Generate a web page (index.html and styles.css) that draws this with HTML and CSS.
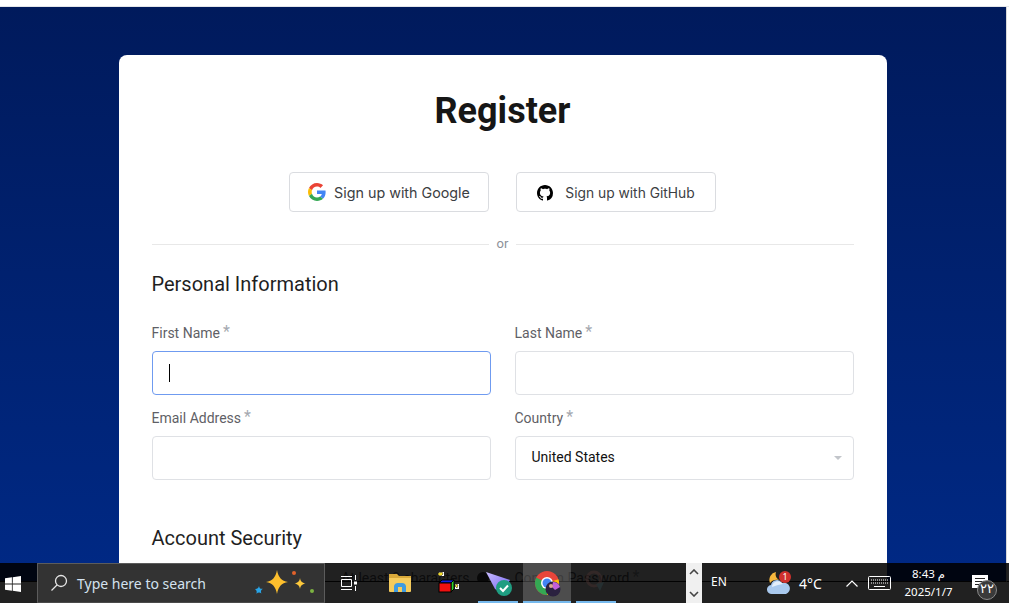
FILE: index.html
```html
<!DOCTYPE html>
<html lang="en">
<head>
<meta charset="utf-8">
<title>Register</title>
<link rel="stylesheet" href="styles.css">
</head>
<body>
<div class="topstrip"></div>
<div class="viewport">
  <main class="page">
    <section class="card">
      <h1 class="title">Register</h1>
      <div class="social">
        <button class="social-btn google">
          <svg class="g-icon" viewBox="0 0 48 48" width="18" height="18"><path fill="#EA4335" d="M24 9.5c3.5 0 6.7 1.2 9.2 3.6l6.9-6.9C35.9 2.4 30.5 0 24 0 14.6 0 6.5 5.4 2.6 13.2l8 6.2C12.4 13.7 17.7 9.500 24 9.500z"/><path fill="#4285F4" d="M47 24.500c0-1.600-.1-3.100-.4-4.500H24v9h12.900c-.6 3-2.200 5.500-4.700 7.200l7.700 6c4.500-4.200 7.100-10.300 7.100-17.700z"/><path fill="#FBBC05" d="M10.600 28.600c-.5-1.400-.8-3-.8-4.600s.3-3.200.8-4.600l-8-6.200C.9 16.500 0 20.100 0 24s.9 7.500 2.600 10.800l8-6.200z"/><path fill="#34A853" d="M24 48c6.500 0 11.900-2.100 15.900-5.800l-7.700-6c-2.200 1.400-4.900 2.300-8.200 2.300-6.300 0-11.600-4.200-13.400-9.900l-8 6.200C6.500 42.600 14.600 48 24 48z"/></svg>
          <span>Sign up with Google</span>
        </button>
        <button class="social-btn github">
          <svg viewBox="0 0 16 16" width="16" height="16"><path fill="#000" d="M8 0C3.580 0 0 3.580 0 8c0 3.540 2.290 6.530 5.470 7.590.4.070.55-.17.55-.38 0-.19-.01-.82-.01-1.490-2.010.37-2.530-.49-2.690-.94-.09-.23-.48-.94-.82-1.130-.28-.15-.68-.52-.01-.53.63-.01 1.080.58 1.230.82.72 1.210 1.870.87 2.330.66.070-.52.28-.87.51-1.070-1.780-.2-3.640-.89-3.640-3.950 0-.87.31-1.590.82-2.150-.08-.2-.36-1.020.08-2.120 0 0 .67-.21 2.200.82.64-.18 1.320-.27 2-.27s1.360.09 2 .27c1.530-1.040 2.200-.82 2.200-.82.44 1.100.16 1.920.08 2.120.51.56.82 1.270.82 2.150 0 3.070-1.870 3.750-3.650 3.950.29.25.54.73.54 1.480 0 1.070-.01 1.930-.01 2.200 0 .21.15.46.55.38A8.010 8.010 0 0 0 16 8c0-4.420-3.580-8-8-8z"/></svg>
          <span>Sign up with GitHub</span>
        </button>
      </div>
      <div class="divider"><span>or</span></div>
      <h2 class="section">Personal Information</h2>
      <div class="grid">
        <div class="group">
          <label class="label">First Name<sup class="req">*</sup></label>
          <div class="field focused"><span class="caret"></span></div>
        </div>
        <div class="group">
          <label class="label">Last Name<sup class="req">*</sup></label>
          <div class="field"></div>
        </div>
        <div class="group">
          <label class="label">Email Address<sup class="req">*</sup></label>
          <div class="field"></div>
        </div>
        <div class="group">
          <label class="label">Country<sup class="req">*</sup></label>
          <div class="field select"><span class="select-value">United States</span><span class="arrow"></span></div>
        </div>
      </div>
      <h2 class="section security">Account Security</h2>
      <div class="grid">
        <div class="group">
          <label class="label pw"><span>At least 8 characters</span><span class="help"></span></label>
          <div class="field"></div>
        </div>
        <div class="group">
          <label class="label">Confirm Password<sup class="req">*</sup></label>
          <div class="field"></div>
        </div>
      </div>
    </section>
  </main>
  <div class="scrollstrip"></div>
</div>

<footer class="taskbar">
  <div class="start">
    <svg viewBox="0 0 16 16" width="16" height="16"><path fill="#fff" d="M0 2.300 6.900 1.300V7.600H0zM7.700 1.200 16 0V7.600H7.700zM0 8.400H6.900V14.700L0 13.700zM7.700 8.400H16V16L7.700 14.800z"/></svg>
  </div>
  <div class="search">
    <svg class="search-icon" viewBox="0 0 18 18" width="18" height="18"><circle cx="11" cy="7" r="5.500" fill="none" stroke="#e6e6e6" stroke-width="1.300"/><path d="M7 11 1.500 16.500" stroke="#e6e6e6" stroke-width="1.300"/></svg>
    <span class="search-text">Type here to search</span>
    <svg class="sparkles" viewBox="0 0 64 32" width="64" height="32"><path fill="#fdbf2d" d="M25 2c1.500 7.500 4.500 11 11 12-6.500 1-9.500 4.500-11 12-1.500-7.500-4.500-11-11-12 6.500-1 9.500-4.500 11-12z"/><path fill="#fdc83c" d="M48 10c.6 3.300 2 4.700 5.500 5.500-3.500.8-4.900 2.200-5.500 5.500-.6-3.300-2-4.700-5.500-5.500 3.500-.8 4.900-2.200 5.500-5.500z"/><circle cx="42" cy="5" r="2" fill="#e2622b"/><circle cx="60" cy="23" r="2" fill="#7cb342"/><path fill="#29a5e8" d="M7 18c.5 2.200 1 3 3.800 2.800-2 1.400-2.200 2.500-1.400 4.700-2-1.400-3-1.300-5 .2.700-2.200.4-3.300-1.500-4.800 2.500.1 3.300-.5 4.100-2.900z"/></svg>
  </div>
  <div class="tb-icon taskview">
    <svg viewBox="0 0 16 16" width="16" height="16"><path fill="none" stroke="#fff" d="M.5 4.500h10v7H.5zM0 1.500h11M0 14.500h11M14.500 0v5M14.500 11v5"/><rect x="13" y="6.500" width="3" height="3" fill="#fff"/></svg>
  </div>
  <div class="tb-icon folder">
    <svg viewBox="0 0 24 20" width="24" height="20"><path fill="#d9a93a" d="M1 1h8l2 2h12v4H1z"/><path fill="#f5cb5c" d="M1 5h22v13a1 1 0 0 1-1 1H2a1 1 0 0 1-1-1z"/><path fill="#3f9be0" d="M6 19v-6a4 4 0 0 1 4-3h4a4 4 0 0 1 4 3v6h-4v-5h-4v5z"/></svg>
  </div>
  <div class="tb-icon">
    <svg viewBox="0 0 24 24" width="24" height="24"><path fill="#fff" d="M3 1h5v4H3z"/><path fill="#f7e02d" stroke="#111" stroke-width=".5" d="M2 2l4-1 1 2-2 2-3-1z"/><path fill="#1020e0" stroke="#000" d="M3 12l3-3h12l-3 3z"/><path fill="#2fd42f" stroke="#000" d="M15 12l3-3v9l-3 3z"/><rect x="3" y="12" width="12" height="9" fill="#f01010" stroke="#000"/><path fill="#fff" d="M19 13h4v5h-4z"/><path fill="#f7e02d" stroke="#111" stroke-width=".5" d="M20 13l2 1-1 3-2-2z"/></svg>
  </div>
  <div class="tb-icon running first-running">
    <svg viewBox="0 0 28 30" width="28" height="30"><defs><linearGradient id="p" x1="0" y1="0" x2="1" y2="1"><stop offset="0" stop-color="#c9bcff"/><stop offset="1" stop-color="#6f5ff0"/></linearGradient></defs><path fill="url(#p)" d="M2 5l24 8-8 13-7-4z"/><circle cx="20" cy="21" r="8" fill="#1f9e82"/><path fill="none" stroke="#fff" stroke-width="2" d="M16 21l3 3 5-5.500"/></svg>
  </div>
  <div class="tb-icon running active">
    <svg viewBox="0 0 32 32" width="32" height="32"><defs><clipPath id="c"><circle cx="16" cy="17" r="12"/></clipPath></defs><g clip-path="url(#c)"><rect x="4" y="5" width="24" height="24" fill="#e9453a"/><path fill="#34a853" d="M4 11l12 6 2 12H4z"/><path fill="#fbbc05" d="M16 17l12-4v16H16z"/></g><circle cx="16" cy="17" r="6" fill="#fff"/><circle cx="16" cy="17" r="4.500" fill="#4285f4"/><circle cx="22" cy="23" r="7.500" fill="#2b2140"/><path fill="#c25fd8" d="M22 16a7.500 7.500 0 0 1 7 5l-5 3-3-3z"/><circle cx="20" cy="20" r="2" fill="#d9a58c"/></svg>
  </div>
  <div class="tb-icon running dim">
    <svg viewBox="0 0 28 24" width="28" height="24"><circle cx="12" cy="9" r="7" fill="none" stroke="#4a3230" stroke-width="3"/><path fill="#2b4045" d="M14 14l8-2-4 9z"/></svg>
  </div>
  <div class="tb-spacer"></div>
  <div class="tray-scroll">
    <svg viewBox="0 0 10 6" width="10" height="6"><path fill="none" stroke="#444" stroke-width="1.600" d="M1 5l4-4 4 4"/></svg>
    <svg viewBox="0 0 10 6" width="10" height="6"><path fill="none" stroke="#444" stroke-width="1.600" d="M1 1l4 4 4-4"/></svg>
  </div>
  <div class="lang">EN</div>
  <div class="weather">
    <svg viewBox="0 0 24 24" width="24" height="24"><path fill="#f6b73c" d="M9 1a8 8 0 0 0-6 11c2-3 6-4 9-3a7 7 0 0 1-3-8z"/><path fill="#a9c9ee" d="M5 23a4.500 4.500 0 0 1-1-9 6 6 0 0 1 11-2 5.500 5.500 0 0 1 4 11z"/><path fill="#e4eefa" d="M5 16a6 6 0 0 1 11-3l-5 1z"/></svg>
    <span class="badge">1</span>
    <span class="temp">4°C</span>
  </div>
  <svg class="chevron" viewBox="0 0 12 7" width="12" height="7"><path fill="none" stroke="#fff" stroke-width="1.200" d="M.5 6.500l5.500-5.500 5.500 5.500"/></svg>
  <svg class="keyboard" viewBox="0 0 23 14" width="23" height="14"><rect x=".5" y=".5" width="22" height="13" rx="1" fill="none" stroke="#fff"/><path stroke="#fff" stroke-dasharray="1 1" d="M3 4h17M3 7h17"/><path stroke="#fff" d="M6 10.500h11"/></svg>
  <div class="clock"><span>8:43 م</span><span>2025/1/7</span></div>
  <div class="notify">
    <svg viewBox="0 0 16 14" width="16" height="14"><path fill="#fff" d="M0 0h16v13H0z"/><path stroke="#222" d="M3 3.500h10M3 6.500h10M3 9.500h6"/></svg>
    <span class="count">٢٢</span>
  </div>
</footer>
</body>
</html>
```
FILE: styles.css
```css
* { box-sizing: border-box; }
html, body { margin: 0; height: 100%; overflow: hidden; background: #fff; }
body { font-family: Roboto, "Liberation Sans", sans-serif; position: relative; width: 1009px; height: 603px; }

.topstrip { height: 7px; background: #fff; border-bottom: 1px solid #e4e6ea; }
.viewport { display: flex; height: 575px; }
.page {
  width: 1006px;
  height: 575px;
  overflow: hidden;
  padding: 48px 1px 0 0;
  background: linear-gradient(180deg, #001a5c 0%, #002985 100%);
  border-bottom: 1px solid #111;
}
.scrollstrip { width: 3px; background: #fff; border-left: 1px solid #d9d9d9; border-bottom: 1px solid #111; }

.card {
  width: 768px;
  margin: 0 auto;
  padding: 36px 33px 60px;
  background: #fff;
  border-radius: 8px;
}
.title {
  margin: 0;
  height: 40px;
  font-size: 36px;
  line-height: 40px;
  font-weight: 700;
  text-align: center;
  color: #161616;
}
.social { display: flex; justify-content: center; gap: 27px; margin-top: 41px; }
.social-btn {
  display: flex;
  align-items: center;
  justify-content: center;
  gap: 8px;
  width: 200px;
  height: 40px;
  padding: 0;
  background: #fff;
  border: 1px solid #dadce0;
  border-radius: 4px;
  font-family: Inter, "Noto Sans", sans-serif;
  font-size: 13.800px;
  font-weight: 400;
  color: #3c4043;
}
.google { font-size: 14.300px; }
.github { gap: 12px; padding-top: 1px; }
.divider {
  display: flex;
  align-items: center;
  gap: 8px;
  height: 18px;
  margin-top: 23px;
  font-size: 13px;
  color: #8c9199;
}
.divider span { margin-top: -2px; }
.divider::before, .divider::after { content: ""; flex: 1; height: 1px; background: #e8e8e8; }
.section {
  margin: 17px 0 0;
  height: 28px;
  font-size: 20px;
  line-height: 28px;
  font-weight: 400;
  color: #1f1f1f;
}
.security { margin-top: 44px; }
.grid {
  display: grid;
  grid-template-columns: 339px 339px;
  column-gap: 24px;
  row-gap: 13px;
  margin-top: 25px;
}
.security + .grid { margin-top: 16px; }
.group { display: flex; flex-direction: column; gap: 8px; }
.label { display: block; height: 20px; font-size: 14px; line-height: 20px; color: #5f5f66; white-space: nowrap; }
.req { margin-left: 3px; font-size: 16px; line-height: 0; color: #a5a9b0; vertical-align: 1px; }
.pw { display: flex; align-items: center; justify-content: flex-end; gap: 7px; padding-right: 2px; }
.help { display: inline-block; width: 12px; height: 12px; border-radius: 50%; background: #444; }
.field {
  display: flex;
  align-items: center;
  height: 44px;
  padding: 0 16px;
  background: #fff;
  border: 1px solid #dfe1e5;
  border-radius: 4px;
  font-size: 14px;
  color: #111;
}
.focused { border-color: #6f9bf0; }
.caret { width: 1px; height: 18px; background: #000; }
.select { justify-content: space-between; padding-right: 11px; }
.select-value { margin-top: -2px; }
.arrow { width: 0; height: 0; border-left: 4px solid transparent; border-right: 4px solid transparent; border-top: 4px solid #c2c5ca; }

.taskbar {
  position: absolute;
  left: 0;
  bottom: 0;
  display: flex;
  align-items: center;
  width: 1009px;
  height: 40px;
  background: rgba(0, 0, 0, .87);
  color: #fff;
  font-family: "Noto Sans", "Open Sans", "DejaVu Sans", sans-serif;
}
.start { display: flex; align-items: center; width: 37px; height: 40px; padding-left: 5px; padding-top: 2px; }
.search {
  position: relative;
  display: flex;
  align-items: center;
  width: 288px;
  height: 40px;
  padding-left: 12px;
  background: #333;
  border: 1px solid #5c5c5c;
  border-bottom-color: #4a4a4a;
}
.search-icon { flex: none; }
.search-text { margin-left: 9px; font-size: 14px; color: #d3e2ef; }
.sparkles { position: absolute; left: 214px; top: 4px; }
.tb-icon { display: flex; align-items: center; justify-content: center; width: 48px; height: 40px; }
.taskview { width: 47px; padding-bottom: 1px; }
.folder { margin-left: 4px; }
.running { width: 40px; margin: 0 2.500px; border-bottom: 2px solid #76b9ed; }
.first-running { margin-left: 6px; }
.active { width: 48px; background: rgba(255,255,255,.2); }
.dim svg { opacity: .45; }
.tb-spacer { flex: 1; }
.tray-scroll {
  display: flex;
  flex-direction: column;
  align-items: center;
  justify-content: space-between;
  width: 16px;
  height: 40px;
  padding: 6px 0;
  background: #f0f0f0;
}
.lang { width: 34px; padding-left: 9px; margin-top: -3px; font-size: 12px; }
.weather { position: relative; display: flex; align-items: center; gap: 8px; margin-left: 31px; width: 79px; }
.badge {
  position: absolute;
  left: 12px;
  top: 0;
  width: 12px;
  height: 12px;
  border-radius: 50%;
  background: #d0312d;
  font-size: 9px;
  line-height: 12px;
  text-align: center;
}
.temp { font-size: 14px; }
.chevron { flex: none; margin-right: 10px; }
.keyboard { flex: none; margin-top: -1px; }
.clock { display: flex; flex-direction: column; align-items: center; width: 47px; margin-left: 14px; font-size: 11.500px; line-height: 18px; }
.notify { position: relative; width: 37px; height: 40px; margin-left: 20px; padding-top: 12px; }
.notify svg { display: block; }
.count {
  position: absolute;
  left: 5px;
  top: 17px;
  width: 20px;
  height: 20px;
  border: 1px solid #8a8a8a;
  border-radius: 50%;
  background: #3a3a3a;
  font-size: 13px;
  line-height: 16px;
  text-align: center;
  font-family: "DejaVu Sans", sans-serif;
}
```
